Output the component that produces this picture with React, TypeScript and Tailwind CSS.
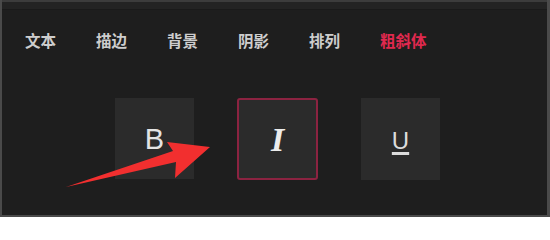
// Tab labels along the top of the text style panel
const tabs = ["文本", "描边", "背景", "阴影", "排列", "粗斜体"];

const cjk = { fontFamily: '"Noto Sans CJK SC", "Noto Sans", sans-serif' };
const sans = { fontFamily: '"Liberation Sans", Arial, sans-serif' };

export default function App() {
	return (
		<div className="relative w-[550px] h-[217px] overflow-hidden bg-[#1e1e1e] border-l-2 border-r-[3px] border-b-2 border-[#4a4a4a] flex flex-col">
			{/* top frame edge */}
			<div className="h-[2px] bg-[#3c3c3c]" />
			<div className="h-[8px] bg-[#232323] border-b border-[#1a1a1a]" />

			{/* tabs */}
			<div className="flex items-center gap-[40px] pl-[23px] mt-[20px] h-[22px]" style={cjk}>
				{tabs.map((t, i) => (
					<span
						key={t}
						className={
							"text-[15.5px] font-bold leading-none " +
							(i === tabs.length - 1 ? "text-[#e0294f]" : "text-[#cdcdcd]")
						}
					>
						{t}
					</span>
				))}
			</div>

			{/* style buttons */}
			<div className="flex gap-[43px] pl-[113px] mt-[46px]">
				<div className="w-[79px] h-[81px] bg-[#2b2b2b] flex items-center justify-center">
					<span className="text-[29px] text-[#e4e4e4] leading-none mt-[2px]" style={sans}>
						B
					</span>
				</div>
				<div className="w-[81px] h-[82px] bg-[#2b2b2b] border-2 border-[#8c2341] rounded-[3px] flex items-center justify-center">
					<span
						className="text-[34px] italic font-bold text-[#ececec] leading-none mt-[2px]"
						style={{ fontFamily: '"Liberation Serif", "Times New Roman", serif' }}
					>
						I
					</span>
				</div>
				<div className="w-[79px] h-[82px] bg-[#2b2b2b] flex items-center justify-center">
					<span
						className="text-[24px] text-[#dcdcdc] leading-none underline underline-offset-[3px] decoration-[3px] mt-[4px]"
						style={sans}
					>
						U
					</span>
				</div>
			</div>

			{/* red annotation arrow */}
			<svg className="absolute left-0 top-0 pointer-events-none" width="550" height="217" viewBox="0 0 550 217">
				<polygon
					points="64,187 171,151 165,142 208,147 173,178 174,162"
					fill="#f22f2f"
				/>
			</svg>
		</div>
	);
}
